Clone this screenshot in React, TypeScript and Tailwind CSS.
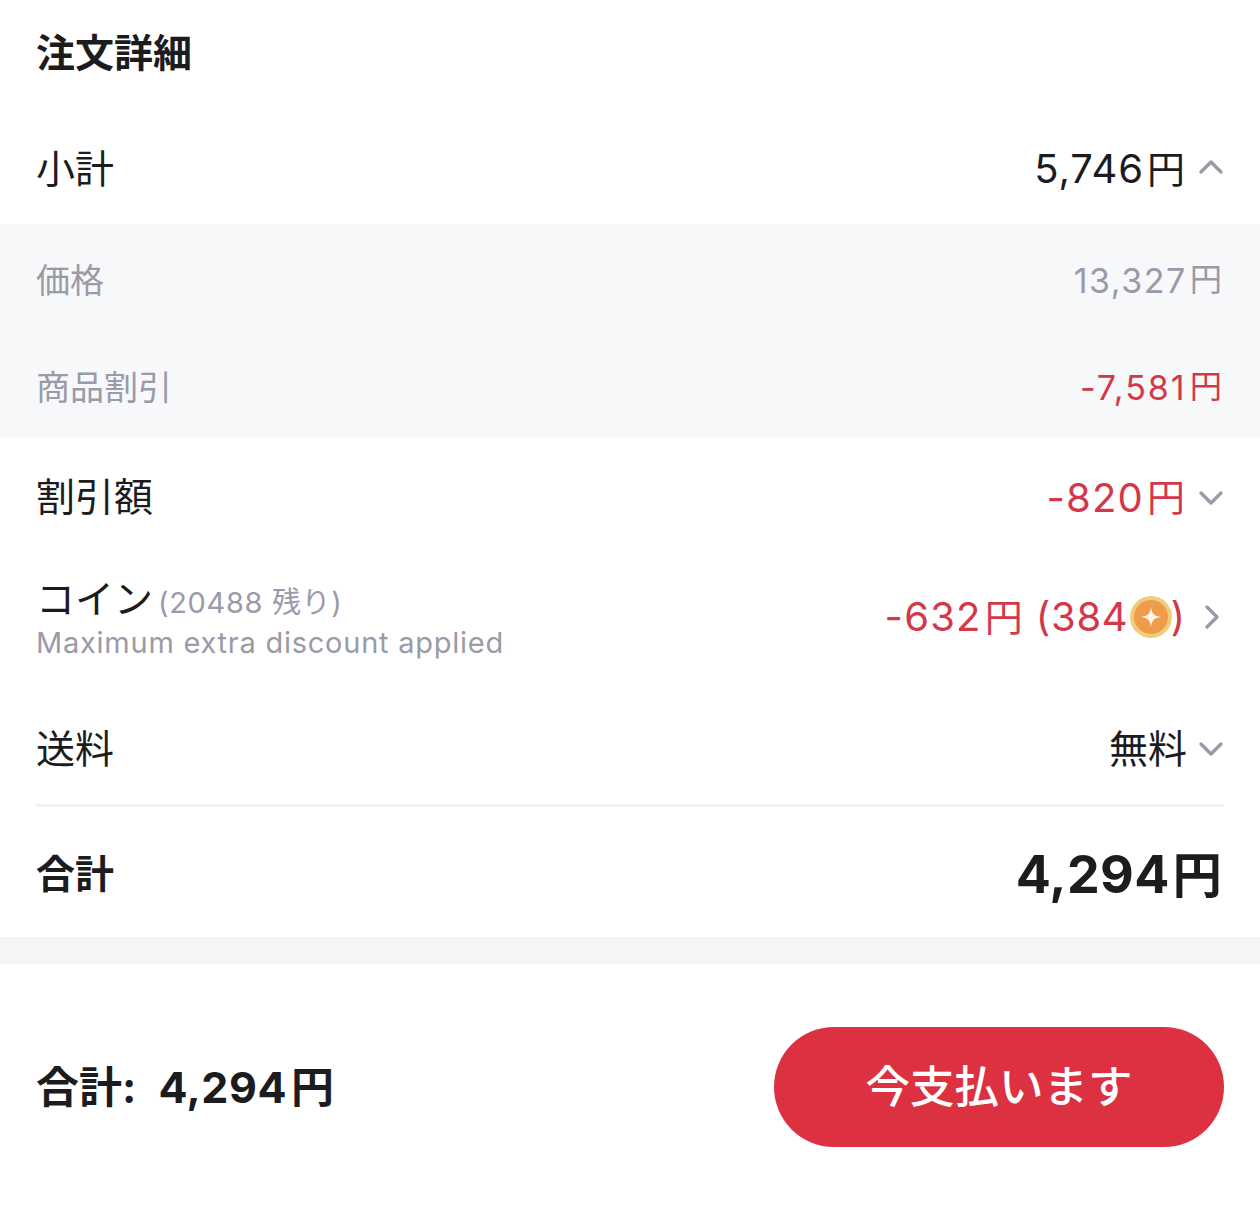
function Chevron({ dir }: { dir: "up" | "down" | "right" }) {
  const d =
    dir === "up"
      ? "M3 16 L13 6 L23 16"
      : dir === "down"
        ? "M3 8 L13 18 L23 8"
        : "M9 3 L19 13 L9 23"
  return (
    <svg width="26" height="26" viewBox="0 0 26 26" fill="none" className="shrink-0">
      <path d={d} stroke="#9a9aa8" strokeWidth="3.4" strokeLinecap="round" strokeLinejoin="round" />
    </svg>
  )
}

function Coin() {
  return (
    <svg width="44" height="44" viewBox="0 0 44 44" className="mr-[-3px] ml-[1px] shrink-0">
      <circle cx="22" cy="22" r="21" fill="#f0cd78" />
      <circle cx="22" cy="22" r="17" fill="#ee9b4c" />
      <path d="M22 12 C23 19 25 21 32 22 C25 23 23 25 22 32 C21 25 19 23 12 22 C19 21 21 19 22 12 Z" fill="#fff6ea" />
    </svg>
  )
}

function Yen({ amount, spacing = "tracking-[0.7px]" }: { amount: string; spacing?: string }) {
  return (
    <span className="inline-flex items-center">
      <span className={spacing}>{amount}</span>
      <span className="ml-[3px] text-[0.95em]">円</span>
    </span>
  )
}

export default function App() {
  return (
    <div className="h-[1208px] w-[1260px] bg-white font-['Inter','Noto_Sans_CJK_JP',sans-serif] text-[#1c1c1e]">
      <div className="px-[36px] pt-[25px] text-[39px] leading-[56px] font-bold">注文詳細</div>

      <div className="mt-[30px] flex h-[113px] items-center justify-between px-[36px] pt-[3px]">
        <div className="text-[39px]">小計</div>
        <div className="flex items-center gap-[13px]">
          <span className="text-[40px]"><Yen amount="5,746" spacing="tracking-[0.9px]" /></span>
          <Chevron dir="up" />
        </div>
      </div>

      <div className="bg-[#f7f8fa] text-[34px] text-[#9a9aa8]">
        <div className="flex h-[107px] items-center justify-between px-[36px] pt-[5px]">
          <span>価格</span>
          <span className="pr-[2px]"><Yen amount="13,327" spacing="tracking-[1.5px]" /></span>
        </div>
        <div className="flex h-[107px] items-center justify-between px-[36px] pt-[5px]">
          <span>商品割引</span>
          <span className="pr-[2px] text-[#d2384a]"><Yen amount="-7,581" spacing="tracking-[2px]" /></span>
        </div>
      </div>

      <div className="flex h-[119px] items-center justify-between px-[36px]">
        <span className="text-[39px]">割引額</span>
        <div className="flex items-center gap-[13px]">
          <span className="text-[40px] text-[#d2384a]"><Yen amount="-820" spacing="tracking-[1.2px]" /></span>
          <Chevron dir="down" />
        </div>
      </div>

      <div className="flex h-[134px] items-center justify-between px-[36px] pb-[14px]">
        <div className="pt-[2px]">
          <div className="flex items-baseline gap-[5px] leading-[45px]">
            <span className="text-[39px]">コイン</span>
            <span className="text-[29px] tracking-[0.65px] text-[#9a9aa8]">(20488 残り)</span>
          </div>
          <div className="text-[29px] leading-[36px] tracking-[0.75px] text-[#9a9aa8]">Maximum extra discount applied</div>
        </div>
        <div className="flex items-center gap-[13px]">
          <span className="flex items-center text-[40px] text-[#d2384a]">
            <Yen amount="-632" spacing="tracking-[1.2px]" />
            <span className="ml-[13px] tracking-[0.7px]">(384</span>
            <Coin />)
          </span>
          <Chevron dir="right" />
        </div>
      </div>

      <div className="mx-[36px] flex h-[116px] items-center justify-between border-b-[3px] border-[#f2f2f4] pt-[3px]">
        <span className="text-[39px]">送料</span>
        <div className="flex items-center gap-[11px]">
          <span className="text-[39px]">無料</span>
          <Chevron dir="down" />
        </div>
      </div>

      <div className="flex h-[130px] items-center justify-between px-[36px] pt-[4px]">
        <span className="text-[39px] font-bold">合計</span>
        <span className="pt-[2px] pr-[2px] text-[52px] font-bold"><Yen amount="4,294" spacing="tracking-[0.3px]" /></span>
      </div>

      <div className="h-[27px] bg-[#f5f5f5]" />

      <div className="flex h-[244px] items-center justify-between px-[36px] pt-[2px]">
        <div className="flex items-center text-[43px] font-bold">
          <span>合計:</span>
          <span className="ml-[22px] tracking-[0.5px]">4,294</span>
          <span className="ml-[4px]">円</span>
        </div>
        <button className="h-[120px] w-[450px] rounded-[60px] bg-[#dc3140] text-[44.5px] font-medium text-white">
          今支払います
        </button>
      </div>
    </div>
  )
}
